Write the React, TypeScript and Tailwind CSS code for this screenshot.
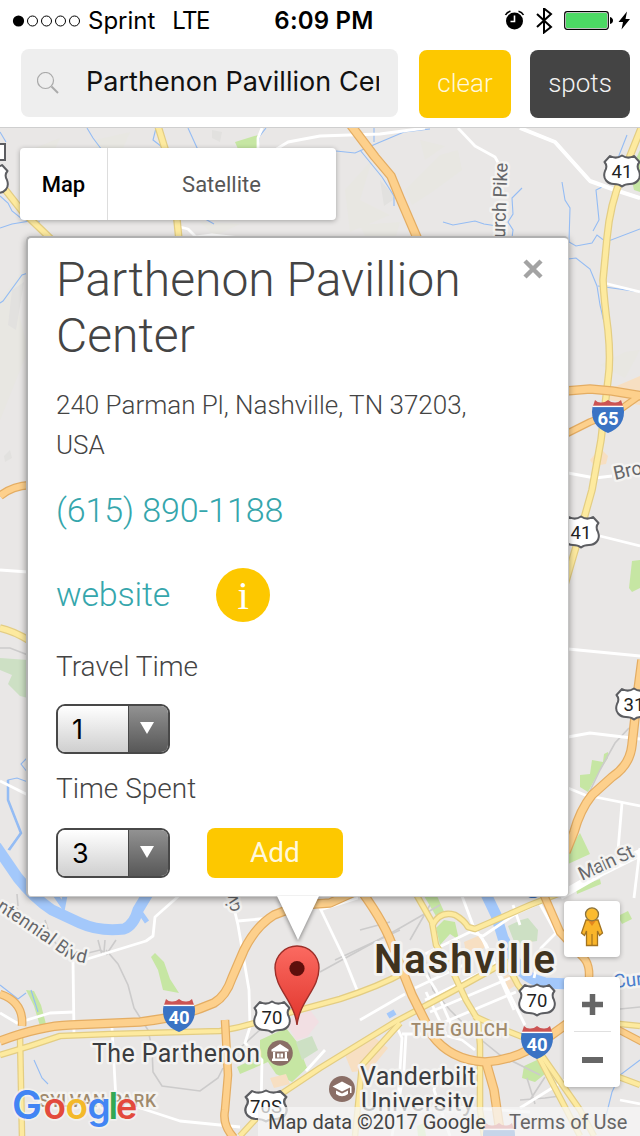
import React from "react";

type RoadKind = "highway" | "arterial";

const terrain = [
  "M30 150 L60 138 L48 165 L70 170 L40 205 L18 190Z",
  "M95 140 L130 132 L118 160 L98 168Z",
  "M345 190 L372 160 L360 200 L390 215 L350 232Z",
  "M405 190 L440 155 L458 150 L462 170 L432 192 L412 205Z",
  "M420 140 L445 146 L425 160Z",
  "M0 300 L25 268 L18 310 L28 350 L0 420Z",
  "M200 222 L240 224 L215 236Z",
  "M600 365 L625 352 L640 350 L625 378Z",
  "M360 225 L400 222 L396 236 L365 236Z",
];

const terrainDark = [
  "M12 290 L24 282 L16 330 L8 325Z",
  "M212 130 L222 132 L220 142 L212 138Z",
  "M380 180 L396 198 L384 206Z",
  "M60 165 L74 158 L66 178Z",
  "M4 456 L10 450 L12 458 L5 462Z",
];

const parks = [
  "M235 142 L258 135 L257 149 L238 149Z",
  "M640 150 L630 172 L634 190 L640 192Z",
  "M632 561 L640 560 L640 588 L632 592 L629 588Z",
  "M580 775 L590 774 L592 760 L603 762 L604 754 L608 752 L608 758 L600 770 L588 792 L580 787Z",
  "M568 850 L580 833 L590 854 L568 864Z",
  "M576 888 L600 879 L601 884 L577 894Z",
  "M151 957 L155 953 L164 962 L170 979 L179 993 L163 990 L158 970Z",
  "M26 990 L34 991 L41 1005 L46 1024 L40 1026 L34 1006Z",
  "M260 1040 L286 1028 L297 1042 L307 1068 L292 1082 L276 1074 L268 1062 L240 1074 L237 1067 L260 1056Z",
  "M424 896 L437 896 L446 916 L439 921Z",
  "M436 928 L444 920 L455 922 L459 940 L450 934 L440 945Z",
  "M524 1066 L537 1060 L545 1074 L535 1082 L522 1078Z",
  "M618 916 L628 911 L632 919 L622 924Z",
  "M417 1126 L424 1123 L426 1136 L418 1136Z",
];

const paleParks = [
  "M0 658 L28 660 L28 698 L20 696 L8 684 L12 675 L0 670Z",
  "M508 926 L521 920 L528 918 L538 930 L537 941 L515 944Z",
  "M296 1042 L312 1036 L318 1050 L302 1060Z",
];

const blush = [
  "M464 942 L478 936 L486 946 L474 956 L466 952Z",
  "M590 460 L600 448 L608 456 L606 464 L594 466Z",
  "M270 1078 L286 1074 L290 1084 L274 1088Z",
  "M345 1055 L375 1038 L388 1048 L370 1070 L352 1072Z",
  "M608 400 L612 388 L640 376 L640 405Z",
  "M504 976 L512 972 L518 984 L508 990Z",
];

const streams = [
  "M87 128 L93 138 L102 150",
  "M156 128 L153 140 L166 150",
  "M188 128 L198 150",
  "M266 128 L259 137 L258 150",
  "M0 132 L6 142",
  "M0 196 L8 203 L12 211 L22 219 L40 222",
  "M0 228 L12 224 L30 221",
  "M0 303 L3 301 L22 275 L28 273",
  "M200 216 L214 224",
  "M336 151 L355 153 L378 143 L404 132 L430 129",
  "M374 128 L374 142",
  "M360 150 L382 177 L394 196 L394 206",
  "M522 188 L512 198 L513 214 L508 222 L513 230 L512 238",
  "M443 222 L453 225 L475 221 L484 224 L497 226",
  "M562 182 L565 200 L570 208 L569 242 L576 246 L592 243 L597 235 L606 242 L640 229",
  "M602 187 L596 190 L599 220 L593 231",
  "M627 135 L618 158 L613 163",
  "M568 259 L576 258 L590 269 L597 286 L600 305 L604 322",
  "M598 286 L640 292",
  "M28 757 L21 764 L28 773",
  "M8 785 L8 780 L17 778 L28 782",
  "M8 781 L8 800 L21 833 L8 850",
  "M0 985 L18 999 L26 993",
  "M31 990 L38 1012",
  "M34 1060 L42 1078 L48 1084",
  "M640 1060 L620 1075 L612 1092 L606 1116",
];

const rails = [
  "M0 648 L10 648 L28 655",
  "M629 728 L615 743 L600 770 L588 795",
  "M0 903 L15 907 L25 916 L45 930 L58 946 L76 956 L100 950 L108 954",
  "M17 894 L18 906 M45 920 L50 935 M98 940 L102 955 M105 940 L104 952 M116 940 L106 955",
  "M106 950 L118 964 L128 985 L134 1008 L148 1030 L152 1048 L153 1072 L162 1086 L200 1091 L218 1078 L223 1068",
  "M240 1048 L262 1028 L275 1022",
  "M320 972 L360 950 L400 928 L440 905",
  "M360 930 L390 922 M335 960 L400 930 M410 940 L430 905",
  "M425 958 L433 990 L450 1010 L474 1034 L500 1055 L540 1075",
  "M520 1100 L545 1098 L560 1096 M527 1078 L535 1104 M545 1077 L530 1100",
  "M620 1009 L640 1007",
];

const streets = [
  "M275 150 L288 142 L320 136 L380 134 L425 128",
  "M262 128 L258 138 L258 150",
  "M458 128 L475 146 L495 157 L500 166",
  "M520 128 L555 142 L590 181 L615 190 L640 198",
  "M180 227 L188 229 L196 237 L212 235 L240 238",
  "M604 283 L640 292",
  "M568 473 L595 478 L612 476",
  "M600 536 L640 546",
  "M568 649 L640 656",
  "M568 737 L590 733 L640 739",
  "M568 788 L585 795 L640 806",
  "M622 803 L618 850",
  "M640 848 L634 898",
  "M0 570 L28 572",
  "M0 781 L28 795",
  "M182 893 L155 917 L153 936 L146 941 L84 960",
  "M73 960 L74 1035",
  "M0 1013 L17 1023 L50 1013 L74 1012",
  "M112 1028 L116 1100 L180 1121 L240 1127",
  "M234 908 L238 925 L249 990 L250 1027 L245 1043 L262 1060 L261 1110",
  "M238 921 L270 918",
  "M306 1071 L325 1050",
  "M320 908 L345 960 L357 990",
  "M320 910 L358 898",
  "M360 1020 L405 994",
  "M462 896 L474 928 L486 944 L500 975 L525 1025",
  "M425 954 L470 932 L483 936 L517 913 L540 903",
  "M415 988 L470 962",
  "M425 1000 L495 966",
  "M430 1012 L510 978",
  "M440 1024 L516 992",
  "M420 965 L436 990 L450 1022 L455 1032",
  "M426 992 L446 1034",
  "M482 938 L492 960 L514 1010",
  "M395 1023 L402 1038 L398 1100 L392 1136 M406 1034 L404 1070 L398 1106",
  "M402 1034 L440 1034 L462 1040 L475 1050",
  "M440 1068 L434 1090 L450 1136",
  "M513 905 L520 925 M540 904 L556 933 L541 948 L534 978",
  "M520 1108 L565 1080",
  "M620 1100 L640 1104",
  "M440 1106 L530 1112",
];

const roads: { kind: RoadKind; width: number; d: string }[] = [
  { kind: "arterial", width: 6, d: "M158 126 L170 165 L177 220 L179 240" },
  { kind: "arterial", width: 6, d: "M0 183 L22 211 L52 240" },
  { kind: "arterial", width: 6, d: "M642 126 L622 176 Q610 204 607 238 L603 280 Q604 300 608 330 Q611 360 608 380 L601 440 L592 490 L578 540 L564 588" },
  { kind: "arterial", width: 6, d: "M0 628 Q14 631 30 641" },
  { kind: "arterial", width: 5, d: "M0 1055 L30 1046 L60 1036 L110 1034 L220 1031 Q245 1027 270 1018 L340 999 Q380 986 405 972" },
  { kind: "arterial", width: 5, d: "M20 1036 L22 1136" },
  { kind: "arterial", width: 5, d: "M240 1136 L275 1098 L320 1068 L395 1022 L455 990 L500 965" },
  { kind: "arterial", width: 5, d: "M416 894 L432 922 L436 945 L452 970 L466 1000 L478 1020 L480 1045 L480 1110 L484 1136" },
  { kind: "arterial", width: 5, d: "M432 926 Q440 910 455 915 Q464 920 468 927 L475 929 L530 905 L568 890" },
  { kind: "arterial", width: 5, d: "M474 1016 L500 1028 L530 1040 L556 1090 L580 1136" },
  { kind: "arterial", width: 5, d: "M505 960 L518 985 L530 1000 M538 1050 L580 1110 L594 1136" },
  { kind: "arterial", width: 5, d: "M355 1136 L362 1065 L400 1023" },
  { kind: "arterial", width: 5, d: "M600 1022 L640 1026 M600 1070 L640 1085" },
  { kind: "highway", width: 8, d: "M350 124 L375 157 L391 176 L400 198 L418 240" },
  { kind: "highway", width: 7, d: "M0 496 Q12 486 30 485" },
  { kind: "highway", width: 8, d: "M566 391 L590 389 L612 391 L642 396" },
  { kind: "highway", width: 6, d: "M566 434 L590 422 L618 411 L642 394" },
  { kind: "highway", width: 8, d: "M642 660 L638 690 Q635 718 632 745 Q630 765 612 777 L592 795 Q580 810 574 832 L566 852" },
  { kind: "highway", width: 7, d: "M0 994 Q24 1002 22 1026" },
  { kind: "highway", width: 8, d: "M0 1041 Q40 1026 70 1025 L140 1022 Q180 1018 214 1003 Q226 996 232 978 L244 950 Q256 926 274 915 L300 905 L330 903 L352 893" },
  { kind: "highway", width: 7, d: "M225 1020 L228 1075 L225 1110 Q222 1125 234 1138" },
  { kind: "highway", width: 8, d: "M362 892 Q386 925 394 950 L412 995 L432 1035 Q450 1060 485 1062 Q520 1060 550 1036 L575 1018" },
  { kind: "highway", width: 8, d: "M486 1062 L494 1090 L501 1138" },
  { kind: "highway", width: 7, d: "M543 893 L560 932 L582 956 Q592 965 588 985" },
  { kind: "highway", width: 6, d: "M600 1020 L642 1042" },
];

const casing: Record<RoadKind, string> = { highway: "#e4ad63", arterial: "#e3cd83" };
const filling: Record<RoadKind, string> = { highway: "#fdd08c", arterial: "#fdea9f" };

function UsShield({ x, y, n, wide }: { x: number; y: number; n: string; wide?: boolean }) {
  return (
    <g transform={`translate(${x} ${y})`}>
      <g transform={wide ? "scale(1.16 1)" : undefined}>
        <path
          d="M-12 -15 Q-6 -11.5 0 -15.5 Q6 -11.5 12 -15 L17.5 -9 Q14 -5 17 0 C20 8 14 13 8 13 Q3 13 0 15.5 Q-3 13 -8 13 C-14 13 -20 8 -17 0 Q-14 -5 -17.5 -9Z"
          fill="#fff"
          stroke="#5c5d61"
          strokeWidth="2"
          strokeLinejoin="round"
        />
      </g>
      <text y="7" textAnchor="middle" fontSize="18.5" fill="#222">
        {n}
      </text>
    </g>
  );
}

function Interstate({ x, y, n }: { x: number; y: number; n: string }) {
  return (
    <g transform={`translate(${x} ${y})`}>
      <path d="M-15 -10 L-13 -16 Q-10 -13 -6.5 -13.5 Q-3 -13.5 0 -16 Q3 -13.5 6.5 -13.5 Q10 -13 13 -16 L15 -10Z" fill="#cc5453" />
      <path d="M-15.5 -9 H15.5 C18 4 11 13 0 17 C-11 13 -18 4 -15.5 -9Z" fill="#3a73c4" />
      <path d="M-15 -9.6 H15" stroke="#fff" strokeWidth="1.4" />
      <text y="9" textAnchor="middle" fontSize="18.5" fontWeight="700" fill="#fff">
        {n}
      </text>
    </g>
  );
}

const halo = {
  stroke: "#f4f3f1",
  strokeWidth: 5,
  strokeLinejoin: "round" as const,
  paintOrder: "stroke",
};

const logo = [
  { ch: "G", x: 12, size: 40, fill: "#4285f4" },
  { ch: "o", x: 43.5, size: 37, fill: "#e34a3c" },
  { ch: "o", x: 65.5, size: 37, fill: "#f4b92a" },
  { ch: "g", x: 87.5, size: 37, fill: "#4285f4" },
  { ch: "l", x: 108.5, size: 37, fill: "#34a853" },
  { ch: "e", x: 116, size: 36, fill: "#e34a3c" },
];

function MapCanvas() {
  return (
    <svg
      className="absolute inset-0 h-full w-full font-['Roboto',sans-serif]"
      viewBox="0 128 640 1008"
      preserveAspectRatio="none"
    >
      <defs>
        <path id="centennial" d="M-4 909 L20 925 L48 944 L64 956 Q76 964 110 966" />
        <linearGradient id="pin" x1="0" y1="0" x2="0" y2="1">
          <stop offset="0" stopColor="#fb6a61" />
          <stop offset="1" stopColor="#e0352c" />
        </linearGradient>
      </defs>
      <rect y="128" width="640" height="1008" fill="#e9e7e6" />
      {terrain.map((d) => <path key={d} d={d} fill="#e8e7e2" />)}
      {terrainDark.map((d) => <path key={d} d={d} fill="#e2e1df" />)}
      {parks.map((d) => <path key={d} d={d} fill="#c6e6a3" />)}
      {paleParks.map((d) => <path key={d} d={d} fill="#cde0c4" />)}
      {blush.map((d) => <path key={d} d={d} fill="#f7dfc2" />)}
      <path d="M286 1022 L310 1010 L319 1022 L307 1037 L296 1040Z" fill="#f2dfe3" />
      <g fill="none" stroke="#a3c8fb">
        <path strokeWidth="11" d="M-4 846 L18 878 Q34 898 52 910 L80 923 Q100 932 124 929 Q134 925 138 910 L150 890" />
        <path strokeWidth="5" d="M52 890 L63 906 L66 890 M140 912 L147 922" />
        <path strokeWidth="11" d="M485 892 L496 915 L503 938 L518 966 Q526 979 545 983 L570 984" />
        <path strokeWidth="6" d="M388 1016 L395 1012" />
      </g>
      <g fill="none" stroke="#94bcf4" strokeWidth="1.1">
        {streams.map((d) => <path key={d} d={d} />)}
        <path d="M8 780 L8 800 L21 833 L9 850" strokeWidth="2.5" />
      </g>
      <g fill="none" stroke="#cccbcb" strokeWidth="1.6">
        {rails.map((d) => <path key={d} d={d} />)}
      </g>
      <g fill="none" stroke="#fff" strokeWidth="2.8" strokeLinejoin="round">
        {streets.map((d) => <path key={d} d={d} />)}
        <path d="M560 896 L600 873 L642 852" strokeWidth="8" />
        <path d="M520 128 L555 142 L590 181 L615 190 L640 198" strokeWidth="4" />
      </g>
      {(["arterial", "highway"] as const).map((kind) => (
        <g key={kind} fill="none" strokeLinejoin="round">
          {roads.filter((r) => r.kind === kind).map((r) => (
            <path key={r.d} d={r.d} stroke={casing[kind]} strokeWidth={r.width + 1.6} />
          ))}
          {roads.filter((r) => r.kind === kind).map((r) => (
            <path key={r.d} d={r.d} stroke={filling[kind]} strokeWidth={r.width - 0.8} />
          ))}
        </g>
      ))}

      <path d="M-4 144 H5 V160 H-4" fill="#fff" stroke="#5c5d61" strokeWidth="2" />
      <UsShield x={-10} y={180} n="" />
      <UsShield x={622} y={171} n="41" />
      <UsShield x={581} y={532} n="41" />
      <UsShield x={634} y={704} n="31" />
      <UsShield x={272} y={1017} n="70" />
      <UsShield x={266} y={1106} n="70S" wide />
      <UsShield x={537} y={1000} n="70" />
      <Interstate x={608} y={416} n="65" />
      <Interstate x={179} y={1015} n="40" />
      <Interstate x={537} y={1042} n="40" />
      <Interstate x={499} y={1139} n="" />
      <path d="M526 895 A8 6 0 0 0 540 895Z" fill="#3a73c4" />

      <g fill="#66676a" fontSize="19" {...halo}>
        <text transform="translate(505 238) rotate(-88)" textLength="75" lengthAdjust="spacingAndGlyphs">urch Pike</text>
        <text transform="translate(615 480) rotate(-13)">Bro</text>
        <text transform="translate(582 881) rotate(-25)" textLength="59">Main St</text>
        <text transform="translate(240 911) rotate(-98)" fontSize="18">d</text>
        <text transform="translate(239 902) rotate(-104)" fontSize="18">v</text>
        <text fontSize="18.5">
          <textPath href="#centennial">ntennial Blvd</textPath>
        </text>
      </g>
      <text transform="translate(614 988) rotate(-6)" fontSize="19" fill="#4b7fce" {...halo}>Cur</text>
      <text x="374" y="973" fontSize="40" fontWeight="600" fill="#40331e" textLength="181" {...halo} strokeWidth={6}>
        Nashville
      </text>
      <g fontSize="17.5" fontWeight="500" fill="#a08a6c" {...halo}>
        <text x="411" y="1036" textLength="97">THE GULCH</text>
        <text x="39" y="1107" textLength="117">SYLVAN PARK</text>
      </g>
      <g fontSize="25" fill="#3b3d40" {...halo}>
        <text x="92" y="1062" textLength="168">The Parthenon</text>
        <text x="360" y="1085" textLength="116">Vanderbilt</text>
        <text x="361" y="1111" textLength="113">University</text>
      </g>

      <g transform="translate(280 1053)">
        <circle r="12.8" fill="#8a6e66" />
        <path d="M-8.5 -3.5 L0 -9 L8.5 -3.5 V-1.5 H-8.5Z M-8 5.5 H8 V8 H-8Z M-7 -1 H-4.8 V6 H-7Z M4.8 -1 H7 V6 H4.8Z M-3 0.5 H-0.5 V4.5 H-3Z M0.5 0.5 H3 V4.5 H0.5Z" fill="#fff" />
      </g>
      <g transform="translate(342 1089)">
        <circle r="13" fill="#8a6e66" />
        <path d="M-9.5 -2.5 L0 -7.5 L9.5 -2.5 V4 H8 V-1.5 L0 2.5Z M-6 1.5 L0 4.5 L6 1.5 V5 Q0 9.5 -6 5Z" fill="#fff" />
      </g>

      <path
        d="M297 1025 C294 1000 275 989 275 968 A22 22 0 0 1 319 968 C319 989 300 1000 297 1025Z"
        fill="url(#pin)"
        stroke="#9c2f29"
        strokeWidth="1.4"
      />
      <circle cx="297" cy="968.5" r="7.6" fill="#5e0f0c" />

      <text
        y="1119"
        fontFamily="Inter, sans-serif"
        fontWeight="600"
        stroke="#f4f3f1"
        strokeOpacity="0.75"
        strokeWidth="3.5"
        paintOrder="stroke"
        strokeLinejoin="round"
      >
        {logo.map((l) => (
          <tspan key={l.x} x={l.x} fontSize={l.size} fill={l.fill}>{l.ch}</tspan>
        ))}
      </text>
    </svg>
  );
}

function StatusBar() {
  return (
    <div className="flex h-[41px] items-center justify-between pl-3 pr-2 text-[24px] leading-none text-black">
      <div className="flex w-[240px] items-center">
        <svg className="h-4 w-[70px]" viewBox="0 0 70 16">
          <circle cx="6.5" cy="8" r="5.6" />
          {[20.5, 34.5, 48.5, 62.5].map((x) => (
            <circle key={x} cx={x} cy="8" r="5" fill="none" stroke="#000" strokeWidth="1" />
          ))}
        </svg>
        <span className="ml-[6px]">Sprint</span>
        <span className="ml-[17px] tracking-[-1.6px]">LTE</span>
      </div>
      <span className="pl-1 font-semibold tracking-[0.2px]">6:09 PM</span>
      <div className="flex w-[240px] items-center justify-end">
        <svg className="mr-0.5 h-[26px] w-[130px]" viewBox="500 8 130 26">
          <circle cx="514.5" cy="21" r="8.5" />
          <path d="M505.5 15 Q507 12 510.5 11.3 M523.5 15 Q522 12 518.5 11.3" stroke="#000" strokeWidth="1.6" fill="none" />
          <path d="M514.5 15.5 V21.5 H510.5" stroke="#fff" strokeWidth="1.6" fill="none" />
          <path d="M537 14 L551 27 L544 32.5 V8.5 L551 14 L537 27" stroke="#000" strokeWidth="2" fill="none" />
          <rect x="564.7" y="11.7" width="43.6" height="17.6" rx="2.5" fill="#fff" stroke="#000" strokeWidth="1.2" />
          <rect x="566" y="13" width="41" height="15" rx="1" fill="#4cd964" />
          <path d="M610 17 Q613 18 613 20.5 Q613 23 610 24Z" />
          <path d="M627 11.5 L618.5 22 H623 L621.5 29.5 L630 19 H625.5Z" />
        </svg>
      </div>
    </div>
  );
}

function Picker({ value }: { value: string }) {
  return (
    <div className="flex h-[50px] w-[114px] overflow-hidden rounded-[9px] border-2 border-[#484848]">
      <div className="flex flex-1 items-center bg-linear-to-b from-white to-[#cfcfcf] pl-[14px] font-['Inter',sans-serif] text-[27px] leading-none text-black">
        {value}
      </div>
      <div className="flex w-[40px] items-center justify-center border-l border-[#484848] bg-linear-to-b from-[#929292] to-[#585858] pb-0.5 pr-[3px]">
        <svg className="h-3 w-[14px]" viewBox="0 0 14 12">
          <path d="M0 0 H14 L7 12Z" fill="#fff" />
        </svg>
      </div>
    </div>
  );
}

function PlaceCard() {
  return (
    <div className="absolute left-[26px] top-[108px] h-[661px] w-[543px] rounded-[5px] border-2 border-b border-r border-[#b0b0b0] border-b-[#c8c8c8] border-r-[#c4c4c4] bg-white shadow-[0_2px_7px_rgba(0,0,0,0.4)]">
      <div className="flex h-full flex-col pl-7 text-[#444444]">
        <div className="flex justify-between pt-[14px]">
          <h1 className="w-[430px] text-[48px] font-light leading-[56px]">
            Parthenon Pavillion Center
          </h1>
          <svg className="mr-[25px] mt-[7px] h-5 w-5" viewBox="0 0 20 20">
            <path d="M2 2 L18 18 M18 2 L2 18" stroke="#a3a3a3" strokeWidth="4.5" />
          </svg>
        </div>
        <p className="mt-[21px] w-[440px] text-[26px] font-light leading-[40px]">
          240 Parman Pl, Nashville, TN 37203, USA
        </p>
        <a className="mt-[23px] text-[34px] font-light leading-[44px] tracking-[-0.1px] text-[#35a6ac]">(615) 890-1188</a>
        <div className="mt-[36px] flex h-[54px] items-center gap-[46px]">
          <a className="pb-0.5 text-[34px] font-light leading-[44px] tracking-[-0.2px] text-[#35a6ac]">website</a>
          <span className="flex h-[54px] w-[54px] items-center justify-center rounded-full bg-[#fdc800] font-['Liberation_Serif',serif] text-[41px] leading-none text-white">
            i
          </span>
        </div>
        <label className="mt-[27px] text-[28px] font-light leading-[36px]">Travel Time</label>
        <div className="mt-[19px]">
          <Picker value="1" />
        </div>
        <label className="mt-[17px] text-[28px] font-light leading-[36px]">Time Spent</label>
        <div className="mt-[21px] flex gap-[37px]">
          <Picker value="3" />
          <button className="h-[50px] w-[136px] rounded-lg bg-[#fdc800] text-[28px] leading-none text-[#fff8dc]">
            Add
          </button>
        </div>
      </div>
      <svg className="absolute left-[247px] top-[656px] h-[50px] w-[46px] overflow-visible" viewBox="0 0 46 50">
        <path d="M2 2 L23 46 L44 2" fill="#fff" className="drop-shadow-[0_2px_2px_rgba(0,0,0,0.45)]" />
        <path d="M-2 -3 H48 V1 H-2Z" fill="#fff" />
      </svg>
    </div>
  );
}

export default function App() {
  return (
    <div className="flex h-[1136px] w-[640px] flex-col overflow-hidden bg-white font-['Roboto',sans-serif]">
      <header className="h-[128px] shrink-0 border-b border-[#cfcfcf] font-['Inter',sans-serif]">
        <StatusBar />
        <div className="flex items-start pl-[21px] pt-2">
          <div className="flex h-[68px] w-[377px] items-center rounded-lg bg-[#eeeeee] pl-4 pr-[19px]">
            <svg className="h-[22px] w-[22px] shrink-0" viewBox="0 0 22 22" fill="none" stroke="#aaa">
              <circle cx="8.5" cy="8.5" r="8" strokeWidth="1.2" />
              <path d="M14.5 14.5 L21 21" strokeWidth="2" />
            </svg>
            <div className="ml-[27px] overflow-hidden whitespace-nowrap pb-[2px] text-[27px] leading-[36px] tracking-[0.03px] text-[#111]">
              Parthenon Pavillion Center
            </div>
          </div>
          <button className="ml-[21px] mt-px h-[68px] w-[92px] rounded-lg bg-[#fdc800] pb-0.5 font-['Roboto',sans-serif] text-[26px] font-light text-[#fff8dc]">
            clear
          </button>
          <button className="ml-[19px] mt-px h-[68px] w-[100px] rounded-lg bg-[#444444] pb-0.5 font-['Roboto',sans-serif] text-[26px] font-light text-[#f2f2f2]">
            spots
          </button>
        </div>
      </header>

      <main className="relative min-h-0 flex-1">
        <MapCanvas />
        <div className="absolute left-5 top-5 flex h-[72px] w-[316px] rounded-[4px] bg-white text-[22px] shadow-[0_1px_5px_rgba(0,0,0,0.3)]">
          <div className="flex w-[87px] items-center justify-center font-medium text-black">Map</div>
          <div className="flex flex-1 items-center justify-center border-l border-[#dddddd] pr-px text-[#565656]">Satellite</div>
        </div>

        <PlaceCard />

        <div className="absolute right-5 top-[773px] flex flex-col gap-5">
          <div className="flex h-14 w-14 items-center justify-center rounded-[4px] bg-white shadow-[0_1px_5px_rgba(0,0,0,0.3)]">
            <svg className="h-10 w-6 -translate-y-0.5" viewBox="0 0 24 40">
              <path
                d="M6 13 H18 L22.5 26 L19.5 28.5 L17.5 24 V38.5 H6.5 V24 L4.5 28.5 L1.5 26Z"
                fill="#f9b52a"
                stroke="#a27320"
                strokeWidth="1.3"
              />
              <path d="M8 13.5 H16 L12 19Z" fill="#e4861d" />
              <path d="M12 27 V38" stroke="#a27320" strokeWidth="1.2" />
              <circle cx="12" cy="7.3" r="6.5" fill="#fbbb2f" stroke="#8b7440" strokeWidth="1.3" />
            </svg>
          </div>
          <div className="flex h-[110px] w-14 flex-col items-center rounded-[4px] bg-white shadow-[0_1px_5px_rgba(0,0,0,0.3)]">
            <div className="flex h-[54px] items-center">
              <svg className="h-[21px] w-[21px]" viewBox="0 0 21 21">
                <path d="M0 10.5 H21 M10.5 0 V21" stroke="#666" strokeWidth="5.5" />
              </svg>
            </div>
            <div className="h-px w-[37px] bg-[#e0e0e0]" />
            <div className="flex h-[55px] items-center">
              <svg className="h-[6px] w-[21px]" viewBox="0 0 21 6">
                <path d="M0 3 H21" stroke="#666" strokeWidth="6" />
              </svg>
            </div>
          </div>
        </div>

        <div className="absolute bottom-0 right-0 flex h-[29px] w-[382px] items-center bg-[#f5f5f5]/75 pl-[10px] text-[20px] leading-none text-[#444444]">
          <span className="w-[241px] whitespace-nowrap">Map data ©2017 Google</span>
          <span className="whitespace-nowrap text-[#666666]">Terms of Use</span>
        </div>
      </main>
    </div>
  );
}
